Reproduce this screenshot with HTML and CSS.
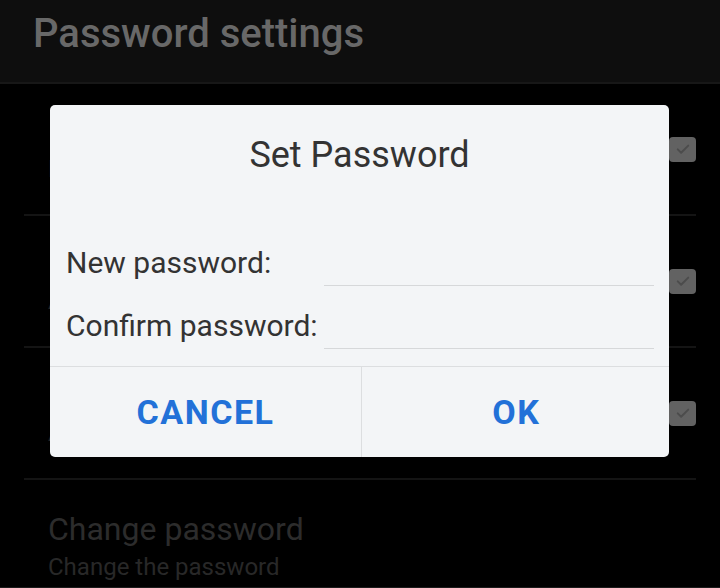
FILE: index.html
```html
<!DOCTYPE html>
<html>
<head>
<meta charset="utf-8">
<link rel="stylesheet" href="styles.css">
</head>
<body>
<div class="screen">
  <header class="appbar"><h1 class="appbar-title">Password settings</h1></header>
  <ul class="prefs">
    <li class="pref">
      <div class="pref-text"><div class="pref-title">Enable password</div><div class="pref-sub">Require a password</div></div>
      <span class="check"><svg viewBox="0 0 24 24" width="18" height="18"><path d="M5 12.5l4.5 4.5L19 7.5" fill="none" stroke="#4c4c4c" stroke-width="2.6" stroke-linecap="round" stroke-linejoin="round"/></svg></span>
    </li>
    <li class="pref">
      <div class="pref-text"><div class="pref-title">Lock on start</div><div class="pref-sub">Ask for password on start</div></div>
      <span class="check"><svg viewBox="0 0 24 24" width="18" height="18"><path d="M5 12.5l4.5 4.5L19 7.5" fill="none" stroke="#4c4c4c" stroke-width="2.6" stroke-linecap="round" stroke-linejoin="round"/></svg></span>
    </li>
    <li class="pref">
      <div class="pref-text"><div class="pref-title">Lock on resume</div><div class="pref-sub">Ask for password on resume</div></div>
      <span class="check"><svg viewBox="0 0 24 24" width="18" height="18"><path d="M5 12.5l4.5 4.5L19 7.5" fill="none" stroke="#4c4c4c" stroke-width="2.6" stroke-linecap="round" stroke-linejoin="round"/></svg></span>
    </li>
    <li class="pref pref-last">
      <div class="pref-text"><div class="pref-title">Change password</div><div class="pref-sub">Change the password</div></div>
    </li>
  </ul>

  <div class="dialog">
    <div class="dialog-title">Set Password</div>
    <div class="dialog-body">
      <div class="field"><span class="field-label">New password:</span><span class="field-input"></span></div>
      <div class="field"><span class="field-label">Confirm password:</span><span class="field-input"></span></div>
    </div>
    <div class="dialog-actions">
      <button class="btn btn-cancel">CANCEL</button>
      <button class="btn btn-ok">OK</button>
    </div>
  </div>
</div>
</body>
</html>
```

FILE: styles.css
```css
* { box-sizing: border-box; }
html, body { margin: 0; padding: 0; background: #000; }
.screen {
  position: relative;
  width: 720px;
  height: 588px;
  overflow: hidden;
  background: #000;
  font-family: Roboto, "Noto Sans", sans-serif;
  border-bottom: 1px solid #1c1c1c;
}
.appbar {
  height: 84px;
  background: #0e0e0e;
  border-bottom: 2px solid #171717;
  display: flex;
  align-items: flex-start;
  padding: 10px 0 0 33px;
}
.appbar-title {
  margin: 0;
  font-size: 40px;
  font-weight: 500;
  color: #686868;
  letter-spacing: 0px;
  line-height: 48px;
}
.prefs {
  list-style: none;
  margin: 0;
  padding: 0 24px;
}
.pref {
  height: 132px;
  border-bottom: 2px solid #141414;
  display: flex;
  align-items: center;
  justify-content: space-between;
  padding-left: 24px;
}
.pref-last { border-bottom: none; padding-top: 29px; align-items: flex-start; justify-content: flex-start; }
.pref-title { font-size: 32px; color: #2c2c2c; line-height: 40px; }
.pref-sub { font-size: 24px; color: #282828; line-height: 36px; }
.check {
  width: 27px;
  height: 25px;
  border-radius: 4px;
  background: #626262;
  display: flex;
  align-items: center;
  justify-content: center;
}
.dialog {
  position: absolute;
  left: 50px;
  top: 105px;
  width: 619px;
  height: 352px;
  background: #f3f5f7;
  border-radius: 5px;
  display: flex;
  flex-direction: column;
}
.dialog-title {
  text-align: center;
  font-size: 36px;
  color: #333;
  padding-top: 29px;
  line-height: 42px;
  height: 118px;
}
.dialog-body {
  padding: 0 15px 0 16px;
  flex: 1;
}
.field {
  display: flex;
  align-items: flex-end;
  height: 63px;
}
.field-label {
  width: 258px;
  font-size: 30px;
  color: #333;
  line-height: 36px;
  padding-bottom: 5px;
}
.field-input {
  flex: 1;
  height: 1px;
  background: #d6d8da;
  margin-bottom: 0;
}
.dialog-actions {
  display: flex;
  height: 91px;
  border-top: 1px solid #dcdee0;
}
.btn {
  border: none;
  background: transparent;
  font-family: Roboto, sans-serif;
  font-weight: 700;
  font-size: 34px;
  color: #2271d8;
  padding: 0 0 0 1.5px;
  letter-spacing: 1.5px;
}
.btn-cancel { flex: 0 0 311px; padding-left: 0; }
.btn-ok { flex: 1; border-left: 1px solid #dcdee0; }
```
